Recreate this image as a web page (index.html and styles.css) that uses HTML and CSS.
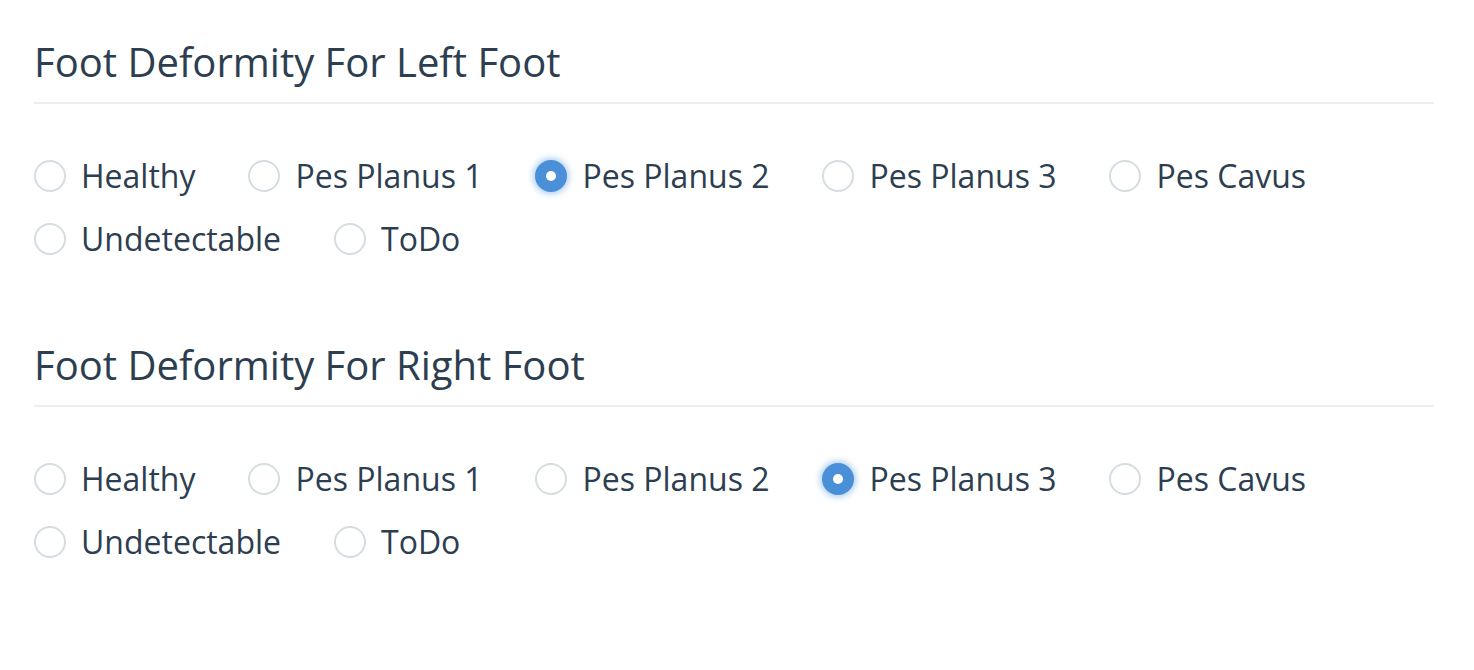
FILE: index.html
```html
<!DOCTYPE html>
<html lang="en">
<head>
<meta charset="utf-8">
<title>Foot Deformity</title>
<link rel="stylesheet" href="styles.css">
</head>
<body>
<main class="page">
  <section class="group">
    <h2 class="group-title">Foot Deformity For Left Foot</h2>
    <div class="options">
      <label class="option"><span class="radio"></span><span class="label">Healthy</span></label>
      <label class="option"><span class="radio"></span><span class="label">Pes Planus 1</span></label>
      <label class="option"><span class="radio checked"></span><span class="label">Pes Planus 2</span></label>
      <label class="option"><span class="radio"></span><span class="label">Pes Planus 3</span></label>
      <label class="option"><span class="radio"></span><span class="label">Pes Cavus</span></label>
      <label class="option"><span class="radio"></span><span class="label">Undetectable</span></label>
      <label class="option"><span class="radio"></span><span class="label">ToDo</span></label>
    </div>
  </section>
  <section class="group">
    <h2 class="group-title">Foot Deformity For Right Foot</h2>
    <div class="options">
      <label class="option"><span class="radio"></span><span class="label">Healthy</span></label>
      <label class="option"><span class="radio"></span><span class="label">Pes Planus 1</span></label>
      <label class="option"><span class="radio"></span><span class="label">Pes Planus 2</span></label>
      <label class="option"><span class="radio checked"></span><span class="label">Pes Planus 3</span></label>
      <label class="option"><span class="radio"></span><span class="label">Pes Cavus</span></label>
      <label class="option"><span class="radio"></span><span class="label">Undetectable</span></label>
      <label class="option"><span class="radio"></span><span class="label">ToDo</span></label>
    </div>
  </section>
</main>
</body>
</html>
```

FILE: styles.css
```css
* { box-sizing: border-box; }
html, body { margin: 0; background: #ffffff; }
body {
  font-family: "Open Sans", "Liberation Sans", sans-serif;
  color: #2c3e50;
}
.page {
  padding: 37px 40px 0 34px;
}
.group {
  margin-bottom: 70px;
}
.group-title {
  margin: 0;
  font-size: 40px;
  font-weight: 400;
  line-height: 50px;
  padding-bottom: 15px;
  border-bottom: 2px solid #eceeef;
}
.options {
  display: flex;
  flex-wrap: wrap;
  padding-top: 40px;
}
.option {
  display: flex;
  align-items: center;
  gap: 15px;
  height: 63px;
  margin-right: 53px;
  font-size: 32px;
}
.radio {
  width: 32px;
  height: 32px;
  border-radius: 50%;
  border: 2px solid #d5dde0;
  background: #fff;
  flex: none;
  display: flex;
  align-items: center;
  justify-content: center;
}
.radio.checked {
  border-color: #4a90d9;
  background: #4a90d9;
  box-shadow: 0 0 6px 2px rgba(74, 144, 217, 0.45);
}
.radio.checked::after {
  content: "";
  width: 10px;
  height: 10px;
  border-radius: 50%;
  background: #fff;
}
.label { line-height: 1; }
```
